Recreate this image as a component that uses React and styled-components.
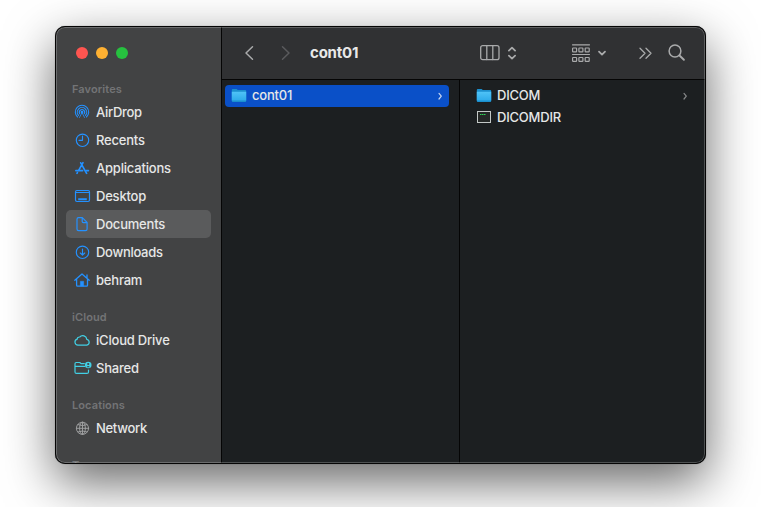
import React from "react";
import styled, { createGlobalStyle } from "styled-components";

const GlobalStyle = createGlobalStyle`
  * { box-sizing: border-box; }
  body { margin: 0; background: #fff; overflow: hidden; }
`;

const Desktop = styled.main`
  width: 761px;
  height: 507px;
  padding: 26px 55px 0;
  overflow: hidden;
  background: #fff;
  font-family: Inter, "Liberation Sans", sans-serif;
`;

const Window = styled.div`
  position: relative;
  display: grid;
  grid-template-columns: 167px 1fr;
  width: 651px;
  height: 438px;
  border-radius: 10px;
  background: #1c1f21;
  box-shadow: 0 18px 50px rgba(0, 0, 0, 0.6), 0 0 1px rgba(0, 0, 0, 0.5);
  overflow: hidden;
  &::after {
    content: "";
    position: absolute;
    inset: 0;
    border: 1px solid #050505;
    border-radius: 10px;
    box-shadow: inset 0 0 0 1px rgba(255, 255, 255, 0.22);
    pointer-events: none;
  }
`;

const Sidebar = styled.aside`
  height: 438px;
  overflow: hidden;
  background: #424344;
  border-right: 1px solid #050505;
  padding: 21px 10px 0 11px;
`;

const Lights = styled.div`
  display: flex;
  gap: 8px;
  padding-left: 10px;
  margin-bottom: 21px;
`;

const Light = styled.span`
  width: 12px;
  height: 12px;
  border-radius: 50%;
  background: ${(p) => p.$color};
`;

const Section = styled.section`
  margin-bottom: 14px;
`;

const Heading = styled.h2`
  margin: 0;
  height: 18px;
  padding-left: 6px;
  font-size: 11px;
  font-weight: 600;
  line-height: 18px;
  letter-spacing: 0.1px;
  color: #737476;
`;

const Place = styled.div`
  display: flex;
  align-items: center;
  height: 28px;
  padding-left: 7px;
  gap: 5px;
  border-radius: 5px;
  background: ${(p) => (p.$selected ? "#5a5b5c" : "transparent")};
  color: ${(p) => p.$tint};
`;

const Label = styled.span`
  font-size: 13px;
  font-weight: 500;
  line-height: 16px;
  letter-spacing: ${(p) => (p.$tight ? -0.3 : -0.2)}px;
  color: #e6e7e7;
  white-space: nowrap;
`;

const Icon = styled.svg`
  display: block;
  flex: none;
  overflow: visible;
`;

const Main = styled.div`
  display: flex;
  flex-direction: column;
`;

const Toolbar = styled.header`
  display: flex;
  align-items: center;
  height: 54px;
  padding: 0 19px 0 21px;
  background: #303133;
  border-bottom: 1px solid #050505;
  color: #a9aaab;
`;

const Title = styled.h1`
  margin: 0 120px 0 18px;
  width: 50px;
  font-size: 15px;
  font-weight: 700;
  line-height: 20px;
  letter-spacing: -0.2px;
  color: #e8e8e8;
  white-space: nowrap;
`;

const Spacer = styled.span`
  flex: none;
  width: ${(p) => p.$w}px;
`;

const Columns = styled.div`
  flex: 1;
  display: grid;
  grid-template-columns: 238px 1fr;
`;

const Column = styled.div`
  padding: 5px ${(p) => p.$right}px 0 3px;
  border-right: ${(p) => (p.$divided ? "1px solid #050505" : "none")};
`;

const FileRow = styled.div`
  display: flex;
  align-items: center;
  height: 22px;
  padding: 0 6px 2px ${(p) => p.$inset}px;
  gap: 5px;
  border-radius: 4px;
  background: ${(p) => (p.$selected ? "#0a50c8" : "transparent")};
  color: ${(p) => (p.$selected ? "#c6d5f2" : "#858788")};
`;

const Fill = styled.span`
  flex: 1;
`;

const line = { fill: "none", stroke: "currentColor", strokeLinecap: "round", strokeLinejoin: "round" };

const glyphs = {
  airdrop: (
    <g strokeWidth="1.1">
      <path d="M4.6 14A6.7 6.7 0 1 1 13.400 14" />
      <path d="M5.500 12.300A4.700 4.700 0 1 1 12.500 12.300" />
      <path d="M6.700 10.700A2.700 2.700 0 1 1 11.300 10.700" />
      <path d="M9 9.500l-2.500 5M9 9.500l2.500 5" strokeWidth=".8" />
      <circle cx="9" cy="9.200" r=".8" fill="currentColor" />
    </g>
  ),
  recents: (
    <g>
      <circle cx="9.5" cy="9.3" r="6.2" />
      <path d="M9.5 5V9.3H6" />
    </g>
  ),
  apps: (
    <g strokeWidth="1.7">
      <path d="M7.700 3.800l5.900 10.500M10 3.700L5.700 11.300M4.400 13.600l-.4.7" />
      <path d="M2.900 11.600h6.700M13 11.600h2.400" />
    </g>
  ),
  desktop: (
    <g strokeWidth="1.2">
      <rect x="2.5" y="3.500" width="14" height="11" rx="1.4" />
      <path d="M2.8 5.5h13.4" />
      <path d="M5.2 12.3h8.6" strokeWidth="1.9" strokeLinecap="butt" />
    </g>
  ),
  document: (
    <path
      strokeWidth="1.2"
      d="M5.600 2.600h3.700l4.800 4.800v6.700q0 1.600-1.600 1.600H5.600q-1.600 0-1.600-1.600V4.200q0-1.600 1.600-1.600zM9.200 2.800v3.600q0 1.200 1.200 1.200h3.500"
    />
  ),
  downloads: (
    <g>
      <circle cx="9.5" cy="9.3" r="6.2" />
      <path d="M9.5 6v6M7.300 10l2.200 2.200 2.200-2.200" />
    </g>
  ),
  home: (
    <g strokeWidth="1.3">
      <path d="M1.800 9.300L9 2.900l7.200 6.400M3.600 8v6.200q0 1 1 1h8.900q1 0 1-1V8M14 4v3" />
      <path d="M7.300 15V10.200h3.400V15z" fill="currentColor" strokeWidth=".4" />
    </g>
  ),
  cloud: (
    <path
      strokeWidth="1.2"
      d="M5 14.100a3 3 0 0 1-.8-5.900 2.200 2.200 0 0 1 2.500-2.200 4.100 4.100 0 0 1 7.100 2.400A2.900 2.900 0 0 1 13.800 14.100z"
    />
  ),
  shared: (
    <g strokeWidth="1.2">
      <path d="M11.300 4.600H8L6.800 3.500H3.200q-1.200 0-1.200 1.200v8.200q0 1.500 1.500 1.500h10.500q1.500 0 1.500-1.500v-1.900M2.200 7.400h9.300" />
      <circle cx="15.200" cy="6" r="3.300" fill="currentColor" stroke="none" />
      <circle cx="15.200" cy="5" r="1.100" fill="#424344" stroke="none" />
      <path d="M13.500 8.200q1.700-2.400 3.400 0z" fill="#424344" stroke="none" />
    </g>
  ),
  globe: (
    <g strokeWidth=".95">
      <circle cx="9.5" cy="9.3" r="6.1" />
      <ellipse cx="9.5" cy="9.3" rx="2.9" ry="6.1" />
      <path d="M9.5 3.300v12M3.400 9.300h12.200M5.100 5.700q4.400 2 8.800 0M5.100 12.900q4.400-2 8.800 0" />
    </g>
  ),
};

const PlaceIcon = ({ name }) => (
  <Icon width="18" height="18" viewBox="0 0 18 18" strokeWidth="1.150" {...line}>
    {glyphs[name]}
  </Icon>
);

const Folder = () => (
  <Icon width="16" height="16" viewBox="0 0 16 16">
    <defs>
      <linearGradient id="folderFace" x1="0" y1="0" x2="0" y2="1">
        <stop offset="0" stopColor="#4fc3f7" />
        <stop offset="1" stopColor="#2eabea" />
      </linearGradient>
    </defs>
    <path d="M.800 3q0-1 1-1h3.800l1.200.9h7.400q1 0 1 1V14q0 1-1 1H1.800q-1 0-1-1z" fill="#1b8fce" />
    <path d="M.800 4.800h14.400v8.700H.800z" fill="url(#folderFace)" />
  </Icon>
);

const ExecFile = () => (
  <Icon width="16" height="16" viewBox="0 0 16 16">
    <rect x="1.500" y="2.500" width="13" height="11" fill="#242726" stroke="#c3c8c7" />
    <path d="M4 5.500h1.500M6 5.500h1.500M8 5.500h1.500" stroke="#2fd455" strokeWidth="1" />
  </Icon>
);

const Chevron = () => (
  <Icon width="5" height="7" viewBox="0 0 5 7" strokeWidth="1.200" {...line}>
    <path d="M1 1.400L3.300 4.200 1 7" />
  </Icon>
);

const blue = "#2491ff";
const cyan = "#42d0e5";
const gray = "#a0a1a2";

const sections = [
  {
    title: "Favorites",
    places: [
      ["airdrop", "AirDrop", blue],
      ["recents", "Recents", blue],
      ["apps", "Applications", blue],
      ["desktop", "Desktop", blue],
      ["document", "Documents", blue],
      ["downloads", "Downloads", blue],
      ["home", "behram", blue],
    ],
  },
  {
    title: "iCloud",
    places: [
      ["cloud", "iCloud Drive", cyan],
      ["shared", "Shared", cyan],
    ],
  },
  { title: "Locations", places: [["globe", "Network", gray]] },
  { title: "Tags", places: [] },
];

const tightNames = ["AirDrop", "Downloads", "Network"];

export default function App() {
  return (
    <Desktop>
      <GlobalStyle />
      <Window>
        <Sidebar>
          <Lights>
            <Light $color="#ff5550" />
            <Light $color="#ffb132" />
            <Light $color="#26c13f" />
          </Lights>
          {sections.map((s) => (
            <Section key={s.title}>
              <Heading>{s.title}</Heading>
              {s.places.map(([icon, name, tint]) => (
                <Place key={name} $tint={tint} $selected={name === "Documents"}>
                  <PlaceIcon name={icon} />
                  <Label $tight={tightNames.includes(name)}>{name}</Label>
                </Place>
              ))}
            </Section>
          ))}
        </Sidebar>
        <Main>
          <Toolbar>
            <Icon width="12" height="16" viewBox="0 0 12 16" strokeWidth="1.500" {...line}>
              <path d="M9.500 1.700L3 8l6.500 6.300" />
            </Icon>
            <Spacer $w={25} />
            <Icon width="12" height="16" viewBox="0 0 12 16" strokeWidth="1.500" opacity=".35" {...line}>
              <path d="M2.500 1.700L9 8l-6.500 6.300" />
            </Icon>
            <Title>cont01</Title>
            <Icon width="20" height="16" viewBox="0 0 20 16" strokeWidth="1.300" {...line}>
              <rect x=".7" y=".7" width="18.300" height="14" rx="2" />
              <path d="M6.800 1v13.500M12.800 1v13.500" />
            </Icon>
            <Spacer $w={8} />
            <Icon width="8" height="14" viewBox="0 0 8 14" strokeWidth="1.700" {...line}>
              <path d="M.9 4.700L4 1.700l3.100 3M.9 9.700l3.100 3 3.100-3" />
            </Icon>
            <Spacer $w={56} />
            <Icon width="18" height="18" viewBox="0 0 18 18" strokeWidth="1.200" {...line}>
              <path d="M.5 .8h17M.5 10.500h17" />
              {[0.6, 6.9, 13.2].map((x) => (
                <React.Fragment key={x}>
                  <rect x={x} y="4" width="4" height="3.800" rx=".6" />
                  <rect x={x} y="13.500" width="4" height="3.800" rx=".6" />
                </React.Fragment>
              ))}
            </Icon>
            <Spacer $w={8} />
            <Icon width="8" height="6" viewBox="0 0 8 6" strokeWidth="1.800" {...line}>
              <path d="M1 1.600l3 3 3-3" />
            </Icon>
            <Spacer $w={33} />
            <Icon width="13" height="12" viewBox="0 0 13 12" strokeWidth="1.300" {...line}>
              <path d="M1 1.300l5 5-5 5M7 1.300l5 5-5 5" />
            </Icon>
            <Spacer $w={16} />
            <Icon width="17" height="17" viewBox="0 0 17 17" strokeWidth="1.500" {...line}>
              <circle cx="7" cy="7" r="5.900" />
              <path d="M11.500 11.500l4.400 4.300" strokeWidth="1.900" />
            </Icon>
          </Toolbar>
          <Columns>
            <Column $divided $right={10}>
              <FileRow $selected $inset={6}>
                <Folder />
                <Label>cont01</Label>
                <Fill />
                <Chevron />
              </FileRow>
            </Column>
            <Column $right={12}>
              <FileRow $inset={13}>
                <Folder />
                <Label>DICOM</Label>
                <Fill />
                <Chevron />
              </FileRow>
              <FileRow $inset={13}>
                <ExecFile />
                <Label>DICOMDIR</Label>
              </FileRow>
            </Column>
          </Columns>
        </Main>
      </Window>
    </Desktop>
  );
}
